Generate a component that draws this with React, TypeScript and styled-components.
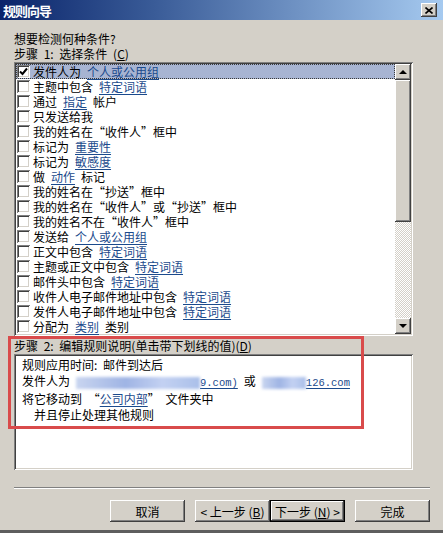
import React from 'react';
import styled, { createGlobalStyle, css } from 'styled-components';

const GlobalStyle = createGlobalStyle`
  html, body { margin: 0; padding: 0; background: #d4d0c8; }
  body { font-family: "Noto Sans CJK SC", "DejaVu Sans", sans-serif; font-size: 12px; }
`;

const raised = css`
  box-shadow: inset -1px -1px #404040, inset 1px 1px #ffffff, inset -2px -2px #808080, inset 2px 2px #d4d0c8;
`;
const sunken = css`
  box-shadow: inset 1px 1px #808080, inset -1px -1px #ffffff, inset 2px 2px #404040, inset -2px -2px #d4d0c8;
`;

type Part = string | { link: string };

// conditions in step 1
const conditions: Part[][] = [
  ['发件人为', { link: '个人或公用组' }],
  ['主题中包含', { link: '特定词语' }],
  ['通过', { link: '指定' }, '帐户'],
  ['只发送给我'],
  ['我的姓名在“收件人”框中'],
  ['标记为', { link: '重要性' }],
  ['标记为', { link: '敏感度' }],
  ['做', { link: '动作' }, '标记'],
  ['我的姓名在“抄送”框中'],
  ['我的姓名在“收件人”或“抄送”框中'],
  ['我的姓名不在“收件人”框中'],
  ['发送给', { link: '个人或公用组' }],
  ['正文中包含', { link: '特定词语' }],
  ['主题或正文中包含', { link: '特定词语' }],
  ['邮件头中包含', { link: '特定词语' }],
  ['收件人电子邮件地址中包含', { link: '特定词语' }],
  ['发件人电子邮件地址中包含', { link: '特定词语' }],
  ['分配为', { link: '类别' }, '类别'],
];

export default function App() {
  return (
    <>
      <GlobalStyle />
      <Window>
        <TitleBar>
          <Title>规则向导</Title>
          <CloseButton>
            <svg width="8" height="7" viewBox="0 0 8 7">
              <path d="M0.5 0.5 L7.5 6.5 M7.5 0.5 L0.5 6.5" stroke="#000" strokeWidth="1.6" />
            </svg>
          </CloseButton>
        </TitleBar>
        <Content>
          <Label>想要检测何种条件?</Label>
          <Label>步骤 1: 选择条件 (<u>C</u>)</Label>
          <ListBox>
            <Rows>
              {conditions.map((parts, i) => (
                <Row key={i} $selected={i === 0}>
                  <Checkbox>
                    {i === 0 && (
                      <svg width="9" height="9" viewBox="0 0 9 9">
                        <path d="M1 4.5 L3.5 7 L8 1.5" stroke="#000" strokeWidth="2" fill="none" />
                      </svg>
                    )}
                  </Checkbox>
                  <RowText>
                    {parts.map((p, j) =>
                      typeof p === 'string' ? <span key={j}>{p}</span> : <Link key={j} $spaced>{p.link}</Link>
                    )}
                  </RowText>
                </Row>
              ))}
            </Rows>
            <ScrollBar>
              <ScrollButton><Arrow $up /></ScrollButton>
              <Track>
                <Thumb />
              </Track>
              <ScrollButton><Arrow /></ScrollButton>
            </ScrollBar>
          </ListBox>
          <StepLabel>步骤 2: 编辑规则说明(单击带下划线的值)(<u>D</u>)</StepLabel>
          <DescBox>
            <DescLine>规则应用时间: 邮件到达后</DescLine>
            <DescLine>
              发件人为
              <Link $spaced><Blur $w={124} /><Mono>9.com)</Mono></Link>
              或
              <Link $spaced><Blur $w={44} /><Mono>126.com</Mono></Link>
            </DescLine>
            <DescLine>将它移动到 “<Link>公司内部</Link>” 文件夹中</DescLine>
            <DescLine $indent>并且停止处理其他规则</DescLine>
          </DescBox>
          <Separator />
          <ButtonRow>
            <Button>取消</Button>
            <ButtonPair>
              <Button>&lt; 上一步 (<u>B</u>)</Button>
              <Button $default>下一步 (<u>N</u>) &gt;</Button>
            </ButtonPair>
            <Button>完成</Button>
          </ButtonRow>
        </Content>
        <Highlight />
      </Window>
    </>
  );
}

const Window = styled.div`
  position: relative;
  width: 443px;
  height: 533px;
  box-sizing: border-box;
  background: #d4d0c8;
  border-bottom: 3px solid #5e5e5e;
  display: flex;
  flex-direction: column;
  color: #000;
  font-size: 12px;
  line-height: 15px;
  word-spacing: 3px;
`;

const TitleBar = styled.div`
  height: 20px;
  flex-shrink: 0;
  display: flex;
  align-items: center;
  justify-content: space-between;
  padding: 0 6px 0 3px;
  background: linear-gradient(to right, #0a246a 0%, #3a5c98 35%, #a6caf0 100%);
`;

const Title = styled.span`
  color: #fff;
  font-weight: bold;
  font-size: 13px;
  letter-spacing: -1px;
`;

const CloseButton = styled.div`
  width: 16px;
  height: 14px;
  display: flex;
  align-items: center;
  justify-content: center;
  background: #d4d0c8;
  ${raised}
`;

const Content = styled.div`
  display: flex;
  flex-direction: column;
  padding: 11px 13px 0 14px;
`;

const Label = styled.div`
  height: 15px;
  white-space: nowrap;
`;

const ListBox = styled.div`
  margin-top: 1px;
  width: 399px;
  height: 274px;
  box-sizing: border-box;
  padding: 2px;
  background: #fff;
  display: flex;
  ${sunken}
`;

const Rows = styled.div`
  flex: 1;
  display: flex;
  flex-direction: column;
`;

const Row = styled.div<{ $selected?: boolean }>`
  height: 15px;
  flex-shrink: 0;
  display: flex;
  align-items: center;
  padding-left: 1px;
  box-sizing: border-box;
  ${(p) =>
    p.$selected &&
    css`
      background: #a7b4d2;
      outline: 1px dotted #3a3a3a;
      outline-offset: -1px;
    `}
`;

const Checkbox = styled.div`
  width: 13px;
  height: 13px;
  flex-shrink: 0;
  box-sizing: border-box;
  margin-right: 3px;
  background: #fff;
  display: flex;
  align-items: center;
  justify-content: center;
  ${sunken}
`;

const RowText = styled.div`
  white-space: nowrap;
  word-spacing: 0;
`;

const Link = styled.span<{ $spaced?: boolean }>`
  color: #1b4a8c;
  text-decoration: underline;
  text-underline-offset: 2px;
  margin: ${(p) => (p.$spaced ? '0 6px' : '0')};
`;

const Mono = styled.span`
  font-family: "Liberation Mono", "DejaVu Sans Mono", monospace;
  font-size: 10.5px;
`;

const Blur = styled.span<{ $w: number }>`
  display: inline-block;
  vertical-align: middle;
  width: ${(p) => p.$w}px;
  height: 12px;
  background: linear-gradient(to right, #c9d5f0, #9fb4e4 40%, #c3d1f2 70%, #aabfe9);
  filter: blur(1.5px);
`;

const ScrollBar = styled.div`
  width: 16px;
  flex-shrink: 0;
  display: flex;
  flex-direction: column;
`;

const ScrollButton = styled.div`
  width: 16px;
  height: 16px;
  flex-shrink: 0;
  box-sizing: border-box;
  background: #d4d0c8;
  display: flex;
  align-items: center;
  justify-content: center;
  ${raised}
`;

const Arrow = styled.div<{ $up?: boolean }>`
  width: 0;
  height: 0;
  border-left: 4px solid transparent;
  border-right: 4px solid transparent;
  ${(p) => (p.$up ? 'border-bottom: 4px solid #000;' : 'border-top: 4px solid #000;')}
`;

const Track = styled.div`
  flex: 1;
  background: repeating-conic-gradient(#ffffff 0 25%, #d4d0c8 0 50%) 0 0 / 2px 2px;
`;

const Thumb = styled.div`
  height: 142px;
  background: #d4d0c8;
  ${raised}
`;

const StepLabel = styled.div`
  margin-top: 2px;
  height: 16px;
  white-space: nowrap;
`;

const DescBox = styled.div`
  width: 399px;
  height: 116px;
  box-sizing: border-box;
  padding: 3px 8px;
  background: #fff;
  line-height: 16px;
  ${sunken}
`;

const DescLine = styled.div<{ $indent?: boolean }>`
  white-space: nowrap;
  padding-left: ${(p) => (p.$indent ? '12px' : '0')};
`;

const Separator = styled.div`
  margin-top: 17px;
  height: 0;
  border-top: 1px solid #808080;
  border-bottom: 1px solid #ffffff;
`;

const ButtonRow = styled.div`
  margin-top: 11px;
  display: flex;
  justify-content: flex-end;
  gap: 10px;
`;

const ButtonPair = styled.div`
  display: flex;
`;

const Button = styled.button<{ $default?: boolean }>`
  width: 75px;
  height: 22px;
  box-sizing: border-box;
  padding: 0;
  font: inherit;
  font-size: 12px;
  color: #000;
  background: #d4d0c8;
  border: ${(p) => (p.$default ? '1px solid #000' : 'none')};
  ${raised}
`;

// red annotation rectangle drawn over the dialog
const Highlight = styled.div`
  position: absolute;
  left: 8px;
  top: 336px;
  width: 356px;
  height: 93px;
  box-sizing: border-box;
  border: 3px solid #d94b4b;
  pointer-events: none;
`;
